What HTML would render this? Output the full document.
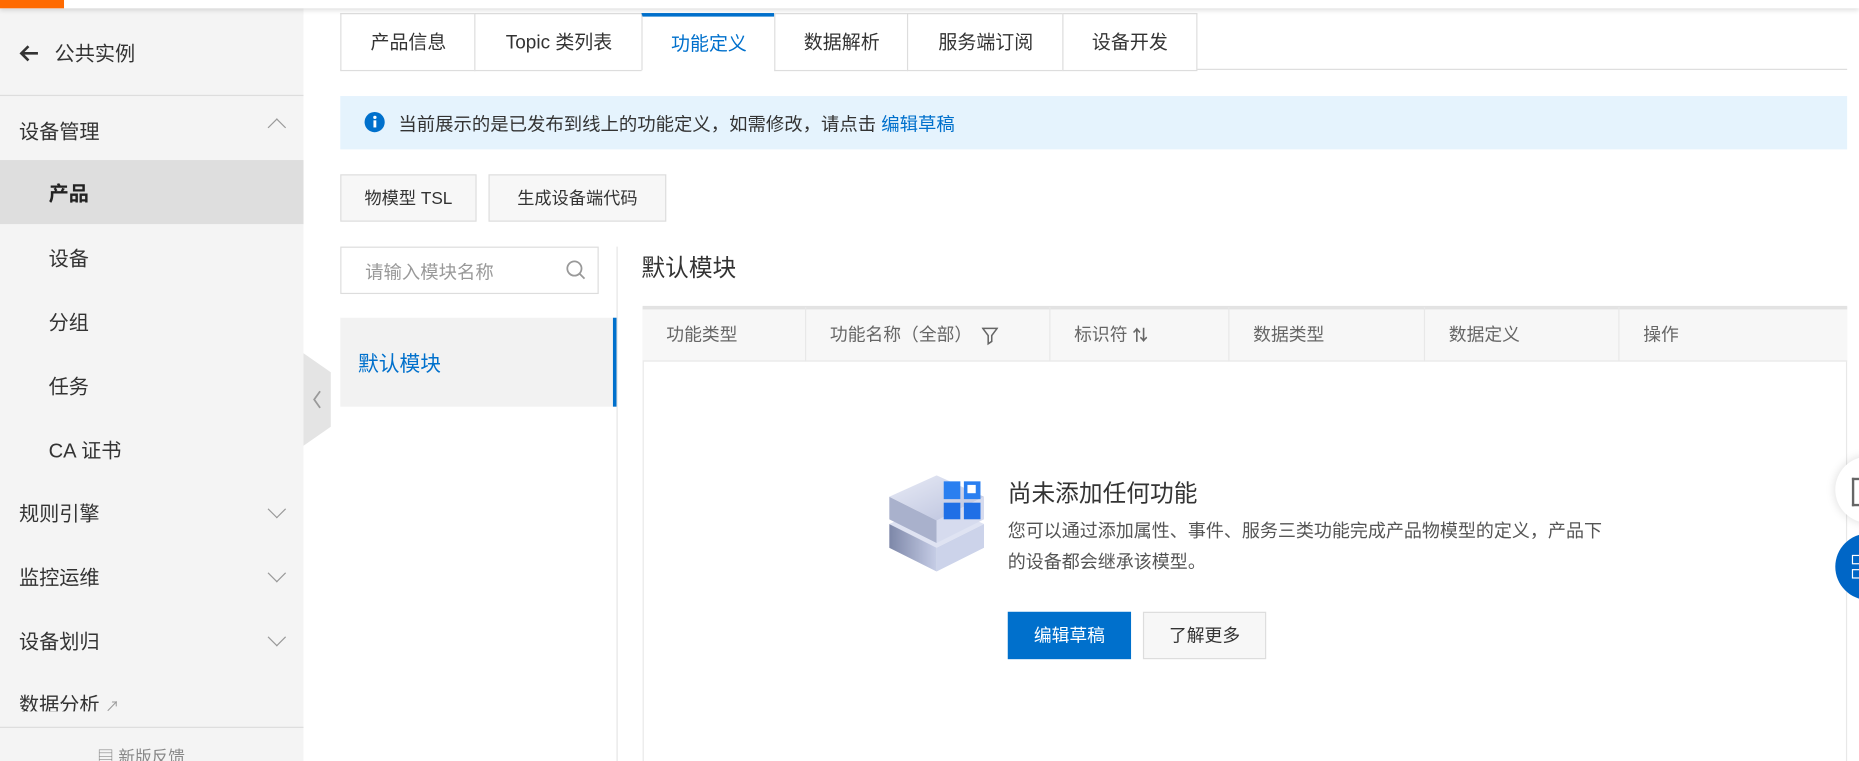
<!DOCTYPE html>
<html><head><meta charset="utf-8"><style>
html,body{margin:0;padding:0;width:1859px;height:761px;overflow:hidden;background:#fff}
#w{position:absolute;left:0;top:0;width:1568px;height:642px;transform:scale(1.18559);transform-origin:0 0;font-family:"Liberation Sans","Noto Sans CJK SC",sans-serif;color:#333;overflow:hidden}
.a{position:absolute}
.side{left:0;top:7px;width:256px;height:640px;background:#f4f4f4}
.mi{position:absolute;left:16px;font-size:17px;color:#333;line-height:20px}
.sub{left:41px}
.chev{position:absolute;left:228px;width:10px;height:10px;border-right:1.5px solid #999;border-bottom:1.5px solid #999}
.tab{position:absolute;top:11px;height:47px;border:1px solid #ddd;border-right:none;background:#fff;font-size:16px;line-height:50px;text-align:center;color:#333}
.th{position:absolute;top:259px;height:46px;line-height:48px;font-size:15px;color:#666;border-left:1px solid #e8e8e8;padding-left:20px;box-sizing:border-box}
</style></head><body><div id="w">
<div class="a" style="left:0;top:0;width:1568px;height:7px;background:#fff;box-shadow:0 2px 4px rgba(0,0,0,.12);z-index:3"></div>
<div class="a" style="left:0;top:0;width:54px;height:7px;background:#ff6a00;z-index:4"></div>
<div class="a side"></div>
<svg class="a" style="left:16px;top:37px" width="18" height="16" viewBox="0 0 18 16"><path d="M8 2 2 8l6 6M2 8h14" fill="none" stroke="#333" stroke-width="2.2"/></svg>
<div class="mi" style="left:46px;top:36px">公共实例</div>
<div class="a" style="left:0;top:80px;width:256px;height:1px;background:#ddd"></div>
<div class="mi" style="top:102px">设备管理</div>
<div class="chev" style="top:102px;transform:rotate(-135deg)"></div>
<div class="a" style="left:0;top:135px;width:256px;height:54px;background:#dedede"></div>
<div class="mi sub" style="top:154px;font-weight:bold;color:#222">产品</div>
<div class="mi sub" style="top:209px">设备</div>
<div class="mi sub" style="top:263px">分组</div>
<div class="mi sub" style="top:317px">任务</div>
<div class="mi sub" style="top:371px">CA 证书</div>
<div class="mi" style="top:424px">规则引擎</div><div class="chev" style="top:424px;transform:rotate(45deg)"></div>
<div class="mi" style="top:478px">监控运维</div><div class="chev" style="top:478px;transform:rotate(45deg)"></div>
<div class="mi" style="top:532px">设备划归</div><div class="chev" style="top:532px;transform:rotate(45deg)"></div>
<div class="mi" style="top:585px;height:15px;overflow:hidden">数据分析 <span style="font-size:12px;color:#999">↗</span></div>
<div class="a" style="left:0;top:613px;width:256px;height:40px;background:#f4f4f4;border-top:1px solid #ddd"></div>
<div class="a" style="left:82px;top:628px;font-size:14px;color:#888">▤ 新版反馈</div>
<svg class="a" style="left:256px;top:298px" width="24" height="78"><path d="M0 0 23 16V62L0 78Z" fill="#e4e4e4"/><path d="M14 32 9 39l5 7" fill="none" stroke="#999" stroke-width="1.5"/></svg>

<div class="a" style="left:287px;top:58px;width:1271px;height:1px;background:#ddd"></div>
<div class="tab" style="left:287px;width:113px">产品信息</div>
<div class="tab" style="left:400px;width:141px">Topic 类列表</div>
<div class="tab" style="left:541px;width:112px;color:#0070cc;border-top:3px solid #0070cc;height:45px;border-bottom:1px solid #fff;line-height:48px">功能定义</div>
<div class="tab" style="left:653px;width:112px">数据解析</div>
<div class="tab" style="left:765px;width:131px">服务端订阅</div>
<div class="tab" style="left:896px;width:112px;border-right:1px solid #ddd">设备开发</div>

<div class="a" style="left:287px;top:81px;width:1271px;height:45px;background:#e5f3fd"></div>
<svg class="a" style="left:307px;top:94px" width="18" height="18"><circle cx="9" cy="9" r="8.5" fill="#0070cc"/><rect x="8" y="7.5" width="2.4" height="6" fill="#fff"/><circle cx="9.2" cy="5" r="1.4" fill="#fff"/></svg>
<div class="a" style="left:336px;top:93px;font-size:15.5px;color:#333">当前展示的是已发布到线上的功能定义，如需修改，请点击 <span style="color:#0070cc">编辑草稿</span></div>

<div class="a" style="left:287px;top:147px;width:113px;height:38px;border:1px solid #ddd;background:#f7f7f7;font-size:14.5px;line-height:40px;text-align:center">物模型 TSL</div>
<div class="a" style="left:412px;top:147px;width:148px;height:38px;border:1px solid #ddd;background:#f7f7f7;font-size:14.5px;line-height:40px;text-align:center">生成设备端代码</div>

<div class="a" style="left:287px;top:208px;width:216px;height:38px;border:1px solid #ddd;background:#fff"></div>
<div class="a" style="left:308px;top:218px;font-size:15.5px;color:#999">请输入模块名称</div>
<svg class="a" style="left:477px;top:219px" width="18" height="18"><circle cx="7.5" cy="7.5" r="6" fill="none" stroke="#999" stroke-width="1.5"/><path d="M12 12 16 16" stroke="#999" stroke-width="1.5"/></svg>
<div class="a" style="left:287px;top:268px;width:230px;height:75px;background:#f2f2f2;border-right:3px solid #0070cc"></div>
<div class="a" style="left:302px;top:294px;font-size:17.5px;color:#0070cc">默认模块</div>
<div class="a" style="left:520px;top:208px;width:1px;height:440px;background:#e5e5e5"></div>

<div class="a" style="left:541px;top:210px;font-size:20px;color:#333">默认模块</div>
<div class="a" style="left:542px;top:258px;width:1016px;height:390px;border:1px solid #e8e8e8;border-top:2px solid #e2e2e2;box-sizing:border-box"></div>
<div class="a" style="left:542px;top:259px;width:1016px;height:46px;background:#f7f7f7;border-bottom:1px solid #e8e8e8;border-top:2px solid #e2e2e2;box-sizing:border-box"></div>
<div class="th" style="left:542px;width:137px;border-left:none">功能类型</div>
<div class="th" style="left:679px;width:206px">功能名称（全部）</div>
<svg class="a" style="left:828px;top:276px" width="14" height="16"><path d="M1 1H13L8.5 7V12L5.5 14V7Z" fill="none" stroke="#666" stroke-width="1.3"/></svg>
<div class="th" style="left:885px;width:151px">标识符 <b style="font-size:13px">⇅</b></div>
<div class="th" style="left:1036px;width:165px">数据类型</div>
<div class="th" style="left:1201px;width:164px">数据定义</div>
<div class="th" style="left:1365px;width:193px">操作</div>

<svg class="a" style="left:750px;top:398px" width="80" height="85" viewBox="0 0 80 85">
<defs><linearGradient id="g1" x1="0" y1="0" x2="1" y2="1"><stop offset="0" stop-color="#e8ebf6"/><stop offset="1" stop-color="#b9c0dc"/></linearGradient><linearGradient id="g2" x1="0" y1="0" x2="1" y2="0"><stop offset="0" stop-color="#7d87a8"/><stop offset="1" stop-color="#c6cde6"/></linearGradient></defs>
<path d="M0 44 40 26 80 44 40 64Z" fill="#dfe3f2"/><path d="M0 44V64L40 84V64Z" fill="url(#g2)"/><path d="M40 64V84L80 64V44Z" fill="#ccd3ea"/>
<path d="M0 21 40 3 80 21 40 41Z" fill="url(#g1)"/><path d="M0 21V40L40 60V41Z" fill="#a9b1cc"/><path d="M40 41V60L80 40V21Z" fill="#d6dbee"/>
<rect x="46" y="8" width="14" height="15" fill="#2a7ff0"/><rect x="63" y="8" width="14" height="15" fill="#2a7ff0"/><rect x="66" y="11" width="7" height="7" fill="#fff"/><rect x="46" y="26" width="14" height="14" fill="#1f6fe6"/><rect x="63" y="26" width="14" height="14" fill="#1f6fe6"/>
</svg>
<div class="a" style="left:850px;top:400px;font-size:20px;color:#333">尚未添加任何功能</div>
<div class="a" style="left:850px;top:436px;font-size:15.2px;color:#555;line-height:26px;width:540px">您可以通过添加属性、事件、服务三类功能完成产品物模型的定义，产品下<br>的设备都会继承该模型。</div>
<div class="a" style="left:850px;top:516px;width:104px;height:40px;background:#0070cc;color:#fff;font-size:15px;line-height:42px;text-align:center">编辑草稿</div>
<div class="a" style="left:964px;top:516px;width:102px;height:38px;border:1px solid #ddd;background:#f7f7f7;font-size:15px;line-height:40px;text-align:center">了解更多</div>

<div class="a" style="left:1548px;top:385px;width:56px;height:56px;border-radius:50%;background:#fff;box-shadow:0 0 8px rgba(0,0,0,.15)"></div>
<div class="a" style="left:1562px;top:403px;width:10px;height:20px;border:2px solid #666;border-right:none"></div>
<div class="a" style="left:1548px;top:450px;width:56px;height:56px;border-radius:50%;background:#0066c6"></div>
<div class="a" style="left:1562px;top:468px;width:6px;height:6px;border:1.5px solid #fff"></div>
<div class="a" style="left:1562px;top:480px;width:6px;height:6px;border:1.5px solid #fff"></div>
</div></body></html>
